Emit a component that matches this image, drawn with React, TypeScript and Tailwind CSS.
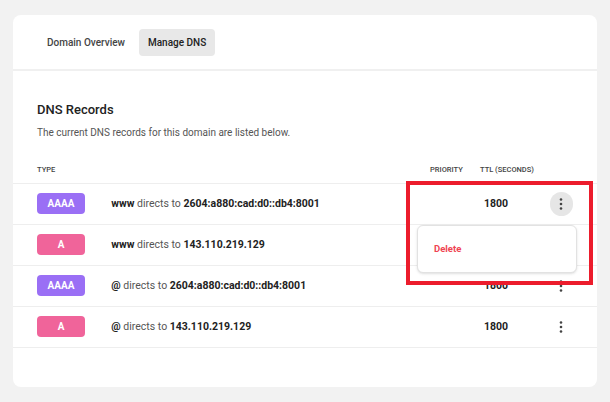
const rows = [
  { type: "AAAA", host: "www", value: "2604:a880:cad:d0::db4:8001" },
  { type: "A", host: "www", value: "143.110.219.129" },
  { type: "AAAA", host: "@", value: "2604:a880:cad:d0::db4:8001" },
  { type: "A", host: "@", value: "143.110.219.129" },
];

function Kebab({ active }: { active?: boolean }) {
  return (
    <div className={`w-6 h-6 rounded-full flex items-center justify-center ${active ? "bg-[#e6e6e6]" : ""}`}>
      <svg width="4" height="12" viewBox="0 0 4 12" fill="#444">
        <circle cx="2" cy="1.5" r="1.3" />
        <circle cx="2" cy="6" r="1.3" />
        <circle cx="2" cy="10.5" r="1.3" />
      </svg>
    </div>
  );
}

export default function App() {
  return (
    <div className="w-[610px] h-[402px] bg-[#f2f2f2] pt-[15px] px-[13px] font-[Roboto,sans-serif] text-[#222]">
      <div className="relative bg-white rounded-lg h-[372px] w-[584px]">
        <div className="flex items-center gap-[2px] px-[22px] h-[56px] pt-[1px] border-b-2 border-[#f0f0f0]">
          <div className="px-[12px] py-[6px] text-[10px] font-medium text-[#444]">Domain Overview</div>
          <div className="px-[9px] py-[6px] text-[10px] font-medium text-[#222] bg-[#e8e8e8] rounded">Manage DNS</div>
        </div>
        <div className="pt-[29px]">
          <div className="px-[24px] text-[13px] font-medium">DNS Records</div>
          <div className="px-[24px] mt-[5px] text-[10px] text-[#555]">The current DNS records for this domain are listed below.</div>
          <div className="flex items-center h-[26px] mt-[18px] px-[24px] text-[7.5px] font-medium text-[#444] border-b border-[#eee]">
            <div className="w-[393px]">TYPE</div>
            <div className="w-[50px]">PRIORITY</div>
            <div>TTL (SECONDS)</div>
          </div>
          {rows.map((r, i) => (
            <div key={i} className="flex items-center h-[41px] px-[24px] border-b border-[#eee]">
              <div className="w-[76px]">
                <div className={`h-[21px] w-[48px] rounded flex items-center justify-center text-white text-[10px] font-bold ${r.type === "A" ? "bg-[#f0649a]" : "bg-[#9a6ff5]"}`}>{r.type}</div>
              </div>
              <div className="w-[381px] text-[10.5px] text-[#555]">
                <span className="font-bold text-[#222]">{r.host}</span> directs to <span className="font-bold text-[#222]">{r.value}</span>
              </div>
              <div className="w-[67px] text-[10.5px] font-bold">1800</div>
              <Kebab active={i === 0} />
            </div>
          ))}
        </div>
        <div className="absolute left-[404px] top-[210px] w-[160px] h-[48px] bg-white border border-[#e2e2e2] rounded-md shadow-sm flex items-center pl-[16px] text-[9.5px] font-bold text-[#ef4452]">Delete</div>
        <div className="absolute left-[393px] top-[166px] w-[187px] h-[104px] border-[4px] border-[#ec1c2c]" />
      </div>
    </div>
  );
}
